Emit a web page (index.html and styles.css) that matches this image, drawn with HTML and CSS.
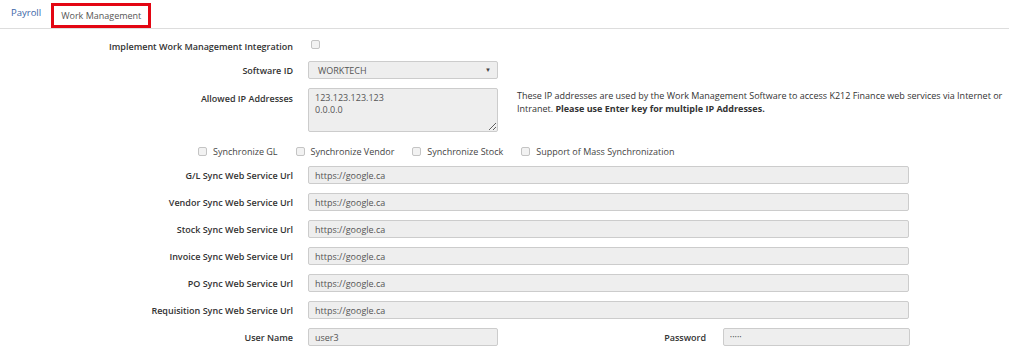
FILE: index.html
```html
<!DOCTYPE html>
<html lang="en">
<head>
  <meta charset="UTF-8" />
  <title>Work Management</title>
  <link rel="stylesheet" href="styles.css">
</head>
<body>

  <ul class="tabs">
    <li><a href="#">Payroll</a></li>
    <li class="active"><a href="#">Work Management</a></li>
  </ul>

  <div class="form">
    <div class="row row-first">
      <label class="lbl">Implement Work Management Integration</label>
      <input type="checkbox" class="check check-main" />
    </div>

    <div class="row">
      <label class="lbl">Software ID</label>
      <div class="select">
        <span>WORKTECH</span>
        <span class="arrow">&#9660;</span>
      </div>
    </div>

    <div class="row row-ip">
      <label class="lbl">Allowed IP Addresses</label>
      <textarea class="ip-box">123.123.123.123
0.0.0.0</textarea>
      <p class="help">
        <span class="help-line">These IP addresses are used by the Work Management Software to access K212 Finance web services via Internet or</span>
        <span class="help-line">Intranet. <b>Please use Enter key for multiple IP Addresses.</b></span>
      </p>
    </div>

    <div class="sync-row">
      <label><input type="checkbox" class="check" /> Synchronize GL</label>
      <label><input type="checkbox" class="check" /> Synchronize Vendor</label>
      <label><input type="checkbox" class="check" /> Synchronize Stock</label>
      <label><input type="checkbox" class="check" /> Support of Mass Synchronization</label>
    </div>

    <div class="row">
      <label class="lbl">G/L Sync Web Service Url</label>
      <input type="text" class="field wide" value="https://google.ca" readonly />
    </div>
    <div class="row">
      <label class="lbl">Vendor Sync Web Service Url</label>
      <input type="text" class="field wide" value="https://google.ca" readonly />
    </div>
    <div class="row">
      <label class="lbl">Stock Sync Web Service Url</label>
      <input type="text" class="field wide" value="https://google.ca" readonly />
    </div>
    <div class="row">
      <label class="lbl">Invoice Sync Web Service Url</label>
      <input type="text" class="field wide" value="https://google.ca" readonly />
    </div>
    <div class="row">
      <label class="lbl">PO Sync Web Service Url</label>
      <input type="text" class="field wide" value="https://google.ca" readonly />
    </div>
    <div class="row">
      <label class="lbl">Requisition Sync Web Service Url</label>
      <input type="text" class="field wide" value="https://google.ca" readonly />
    </div>

    <div class="row">
      <label class="lbl">User Name</label>
      <input type="text" class="field short" value="user3" readonly />
      <label class="lbl lbl-pass">Password</label>
      <input type="password" class="field pass" value="12345" readonly />
    </div>
  </div>

</body>
</html>
```

FILE: styles.css
```css
body {
  font-family: "Open Sans", Arial, sans-serif;
  font-size: 9px;
  color: #333;
  margin: 0;
  background: #fff;
}

/* tabs */
.tabs {
  list-style: none;
  margin: 0;
  padding: 3px 0 0 0;
  display: flex;
  border-bottom: 1px solid #ddd;
}

.tabs li a {
  display: block;
  height: 19px;
  line-height: 19px;
  padding: 0 10px 0 11px;
  color: #3a65a8;
  text-decoration: none;
  font-size: 9.5px;
}

.tabs li.active a {
  color: #555;
  font-size: 9px;
  border: 3px solid #e30613;
  padding: 0 7px;
}

/* form */
.form {
  padding-top: 8px;
}

.row {
  display: flex;
  align-items: center;
  height: 18px;
  margin-bottom: 9px;
}

.row-first {
  margin-bottom: 6px;
}

.lbl {
  flex: none;
  width: 308px;
  text-align: right;
  font-weight: 600;
  color: #333;
  padding-right: 15px;
  box-sizing: border-box;
}

.check {
  appearance: none;
  -webkit-appearance: none;
  width: 9px;
  height: 9px;
  margin: 0;
  border: 1px solid #c4c4c4;
  border-radius: 2px;
  background: #f2f2f2;
  box-sizing: border-box;
}

.check-main {
  margin: 0 0 4px 3px;
}

.select {
  width: 190px;
  height: 18px;
  box-sizing: border-box;
  border: 1px solid #ccc;
  border-radius: 2px;
  background: #eee;
  color: #555;
  display: flex;
  justify-content: space-between;
  align-items: center;
  padding: 0 6px 0 9px;
}

.arrow {
  font-size: 6px;
  color: #444;
}

.row-ip {
  height: 44px;
  align-items: flex-start;
  margin-bottom: 10px;
}

.row-ip .lbl {
  padding-top: 4px;
}

.ip-box {
  width: 190px;
  height: 44px;
  box-sizing: border-box;
  border: 1px solid #ccc;
  border-radius: 2px;
  background: #eee;
  color: #555;
  font-family: "Open Sans", Arial, sans-serif;
  font-size: 9px;
  line-height: 12px;
  padding: 3px 6px;
  margin: 0;
}

.help {
  margin: 0 0 0 19px;
  width: 488px;
  line-height: 13px;
  color: #333;
  padding-top: 1px;
}

.help-line {
  display: block;
  white-space: nowrap;
}

.sync-row {
  display: flex;
  align-items: center;
  gap: 18px;
  height: 18px;
  padding-left: 198px;
  margin-bottom: 6px;
  color: #444;
}

.sync-row label {
  display: flex;
  align-items: center;
  gap: 6px;
}

.field {
  height: 18px;
  box-sizing: border-box;
  border: 1px solid #ccc;
  border-radius: 2px;
  background: #eee;
  color: #555;
  font-family: "Open Sans", Arial, sans-serif;
  font-size: 9px;
  padding: 0 6px;
  margin: 0;
  outline: none;
}

.wide {
  width: 601px;
}

.short {
  width: 190px;
}

.lbl-pass {
  width: 225px;
  padding-right: 17px;
}

.pass {
  width: 187px;
  font-size: 5px;
  letter-spacing: 0.5px;
}
```
